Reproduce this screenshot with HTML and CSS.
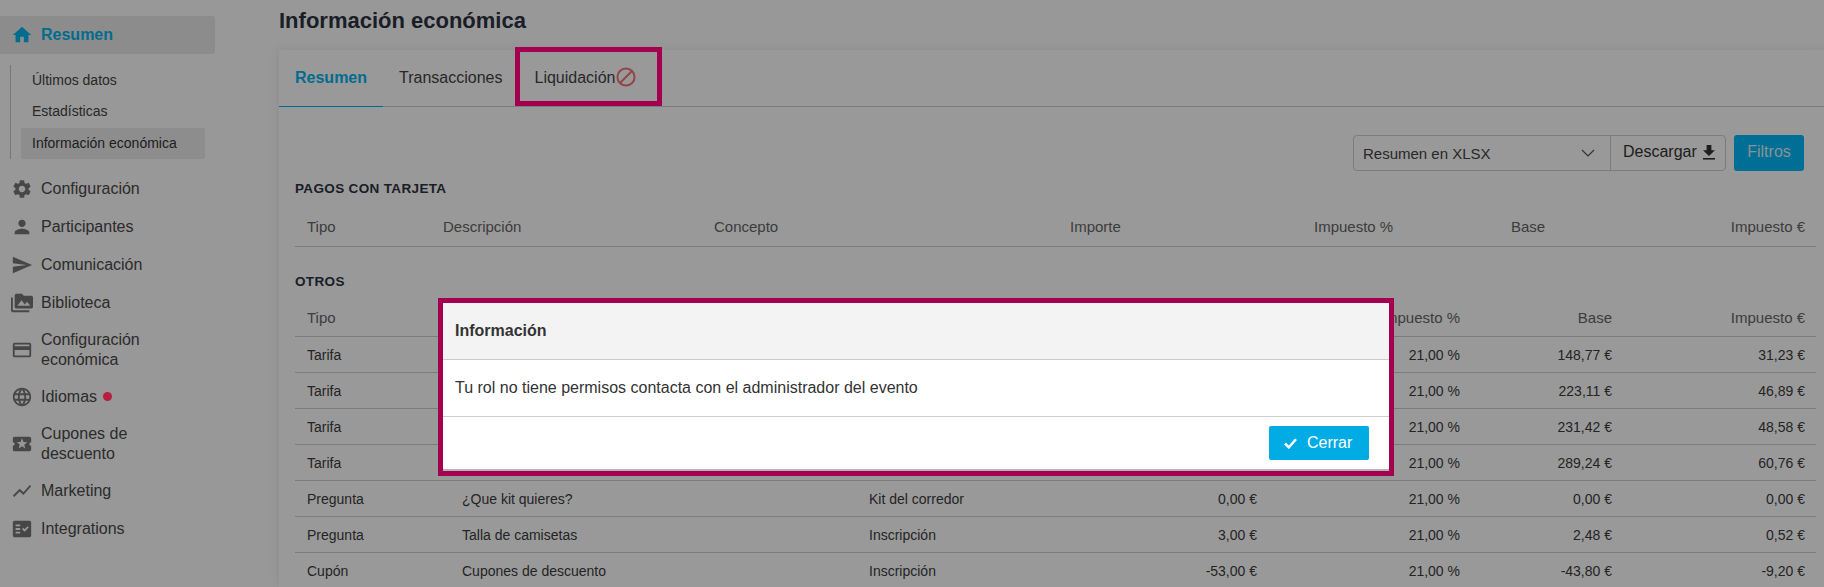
FILE: index.html
```html
<!DOCTYPE html>
<html lang="es">
<head>
<meta charset="utf-8">
<title>Información económica</title>
<link rel="stylesheet" href="styles.css">
</head>
<body>
<div class="app">
  <nav class="sidebar">
    <a class="nav-item nav-active"><svg class="nav-icon" viewBox="0 0 24 24"><path d="M10 20v-6h4v6h5v-8h3L12 3 2 12h3v8z"/></svg><span class="nav-text">Resumen</span></a>
    <div class="subnav">
      <a class="sub-item">Últimos datos</a>
      <a class="sub-item">Estadísticas</a>
      <a class="sub-item sub-active">Información económica</a>
    </div>
    <a class="nav-item"><svg class="nav-icon" viewBox="0 0 24 24"><path d="M19.14 12.94c.04-.3.06-.61.06-.94 0-.32-.02-.64-.07-.94l2.03-1.58c.18-.14.23-.41.12-.61l-1.92-3.32c-.12-.22-.37-.29-.59-.22l-2.39.96c-.5-.38-1.03-.7-1.62-.94l-.36-2.54c-.04-.24-.24-.41-.48-.41h-3.84c-.24 0-.43.17-.47.41l-.36 2.54c-.59.24-1.13.57-1.62.94l-2.39-.96c-.22-.08-.47 0-.59.22L2.74 8.87c-.12.21-.08.47.12.61l2.03 1.58c-.05.3-.09.63-.09.94s.02.64.07.94l-2.03 1.58c-.18.14-.23.41-.12.61l1.92 3.32c.12.22.37.29.59.22l2.39-.96c.5.38 1.03.7 1.62.94l.36 2.54c.05.24.24.41.48.41h3.84c.24 0 .44-.17.47-.41l.36-2.54c.59-.24 1.13-.56 1.62-.94l2.39.96c.22.08.47 0 .59-.22l1.92-3.32c.12-.22.07-.47-.12-.61l-2.01-1.58zM12 15.6c-1.98 0-3.6-1.62-3.6-3.6s1.62-3.6 3.6-3.6 3.6 1.62 3.6 3.6-1.62 3.6-3.6 3.6z"/></svg><span class="nav-text">Configuración</span></a>
    <a class="nav-item"><svg class="nav-icon" viewBox="0 0 24 24"><path d="M12 12c2.21 0 4-1.79 4-4s-1.79-4-4-4-4 1.79-4 4 1.79 4 4 4zm0 2c-2.67 0-8 1.34-8 4v2h16v-2c0-2.66-5.33-4-8-4z"/></svg><span class="nav-text">Participantes</span></a>
    <a class="nav-item"><svg class="nav-icon" viewBox="0 0 24 24"><path d="M2.01 21L23 12 2.01 3 2 10l15 2-15 2z"/></svg><span class="nav-text">Comunicación</span></a>
    <a class="nav-item"><svg class="nav-icon" viewBox="0 0 24 24"><path d="M2 6H0v5h.01L0 20c0 1.1.9 2 2 2h18v-2H2V6zm20-2h-8l-2-2H6c-1.1 0-1.99.9-1.99 2L4 16c0 1.1.9 2 2 2h16c1.1 0 2-.9 2-2V6c0-1.1-.9-2-2-2zM7 15l4.5-6 3.5 4.51 2.5-3.01L21 15H7z"/></svg><span class="nav-text">Biblioteca</span></a>
    <a class="nav-item"><svg class="nav-icon" viewBox="0 0 24 24"><path d="M20 4H4c-1.11 0-1.99.89-1.99 2L2 18c0 1.11.89 2 2 2h16c1.11 0 2-.89 2-2V6c0-1.11-.89-2-2-2zm0 14H4v-6h16v6zm0-10H4V6h16v2z"/></svg><span class="nav-text">Configuración económica</span></a>
    <a class="nav-item"><svg class="nav-icon" viewBox="0 0 24 24"><path d="M11.99 2C6.47 2 2 6.48 2 12s4.47 10 9.99 10C17.52 22 22 17.52 22 12S17.52 2 11.99 2zm6.93 6h-2.95c-.32-1.25-.78-2.45-1.38-3.56 1.84.63 3.37 1.91 4.33 3.56zM12 4.04c.83 1.2 1.48 2.53 1.91 3.96h-3.82c.43-1.43 1.08-2.76 1.91-3.96zM4.26 14C4.1 13.36 4 12.69 4 12s.1-1.36.26-2h3.38c-.08.66-.14 1.32-.14 2 0 .68.06 1.34.14 2H4.26zm.82 2h2.95c.32 1.25.78 2.45 1.38 3.56-1.84-.63-3.37-1.9-4.33-3.56zm2.95-8H5.08c.96-1.66 2.49-2.93 4.33-3.56C8.81 5.55 8.35 6.75 8.03 8zM12 19.96c-.83-1.2-1.48-2.53-1.91-3.96h3.82c-.43 1.43-1.08 2.76-1.91 3.96zM14.34 14H9.66c-.09-.66-.16-1.32-.16-2 0-.68.07-1.35.16-2h4.68c.09.65.16 1.32.16 2 0 .68-.07 1.34-.16 2zm.25 5.56c.6-1.11 1.06-2.31 1.38-3.56h2.95c-.96 1.65-2.49 2.93-4.33 3.56zM16.36 14c.08-.66.14-1.32.14-2 0-.68-.06-1.34-.14-2h3.38c.16.64.26 1.31.26 2s-.1 1.36-.26 2h-3.38z"/></svg><span class="nav-text">Idiomas</span><span class="nav-dot"></span></a>
    <a class="nav-item"><svg class="nav-icon" viewBox="0 0 24 24"><path d="M20 12c0-1.1.9-2 2-2V6c0-1.1-.9-2-2-2H4c-1.1 0-1.99.9-1.99 2v4c1.1 0 1.99.9 1.99 2s-.89 2-2 2v4c0 1.1.9 2 2 2h16c1.1 0 2-.9 2-2v-4c-1.1 0-2-.9-2-2zm-4.42 4.8L12 14.5l-3.58 2.3 1.08-4.12-3.29-2.69 4.24-.25L12 5.8l1.54 3.95 4.24.25-3.29 2.69 1.09 4.11z"/></svg><span class="nav-text">Cupones de descuento</span></a>
    <a class="nav-item"><svg class="nav-icon" viewBox="0 0 24 24"><path d="M3.5 18.49l6-6.01 4 4L22 6.92l-1.41-1.41-7.09 7.97-4-4L2 16.99z"/></svg><span class="nav-text">Marketing</span></a>
    <a class="nav-item"><svg class="nav-icon" viewBox="0 0 24 24"><path d="M20 3H4c-1.1 0-2 .9-2 2v14c0 1.1.9 2 2 2h16c1.1 0 2-.9 2-2V5c0-1.1-.9-2-2-2zM10 17H5v-2h5v2zm0-4H5v-2h5v2zm0-4H5V7h5v2zm4.82 6L12 12.16l1.41-1.41 1.41 1.42L17.99 9l1.42 1.42L14.82 15z"/></svg><span class="nav-text">Integrations</span></a>
  </nav>

  <main class="main">
    <h1 class="page-title">Información económica</h1>
    <section class="card">
      <div class="tabs">
        <a class="tab tab-active">Resumen</a>
        <a class="tab">Transacciones</a>
        <a class="tab tab-marked">Liquidación<svg class="ban-icon" viewBox="0 0 20 20"><circle cx="10" cy="10" r="8.6"/><path d="M4 16L16 4"/></svg></a>
      </div>
      <div class="card-body">
        <div class="toolbar">
          <div class="export">
            <div class="export-select"><span>Resumen en XLSX</span><svg class="chevron" viewBox="0 0 14 8"><path d="M1 1l6 6 6-6"/></svg></div>
            <button class="export-btn">Descargar<svg class="dl-icon" viewBox="0 0 14 15"><path d="M4.6 0h4.8v5.2H13L7 11 1 5.2h3.6z"/><path d="M1 13h12v1.6H1z"/></svg></button>
          </div>
          <button class="filters-btn">Filtros</button>
        </div>

        <h2 class="section-title section-first">PAGOS CON TARJETA</h2>
        <table class="data data-cards">
          <thead><tr><th>Tipo</th><th>Descripción</th><th>Concepto</th><th>Importe</th><th>Impuesto %</th><th>Base</th><th>Impuesto €</th></tr></thead>
        </table>

        <h2 class="section-title section-next">OTROS</h2>
        <table class="data data-others">
          <thead><tr><th>Tipo</th><th></th><th></th><th></th><th>Impuesto %</th><th>Base</th><th>Impuesto €</th></tr></thead>
          <tbody>
            <tr><td>Tarifa</td><td></td><td></td><td></td><td>21,00 %</td><td>148,77 €</td><td>31,23 €</td></tr>
            <tr><td>Tarifa</td><td></td><td></td><td></td><td>21,00 %</td><td>223,11 €</td><td>46,89 €</td></tr>
            <tr><td>Tarifa</td><td></td><td></td><td></td><td>21,00 %</td><td>231,42 €</td><td>48,58 €</td></tr>
            <tr><td>Tarifa</td><td></td><td></td><td></td><td>21,00 %</td><td>289,24 €</td><td>60,76 €</td></tr>
            <tr><td>Pregunta</td><td>¿Que kit quieres?</td><td>Kit del corredor</td><td>0,00 €</td><td>21,00 %</td><td>0,00 €</td><td>0,00 €</td></tr>
            <tr><td>Pregunta</td><td>Talla de camisetas</td><td>Inscripción</td><td>3,00 €</td><td>21,00 %</td><td>2,48 €</td><td>0,52 €</td></tr>
            <tr><td>Cupón</td><td>Cupones de descuento</td><td>Inscripción</td><td>-53,00 €</td><td>21,00 %</td><td>-43,80 €</td><td>-9,20 €</td></tr>
          </tbody>
        </table>
      </div>
    </section>
  </main>
</div>

<div class="backdrop"></div>
<div class="modal">
  <div class="modal-head">Información</div>
  <div class="modal-body">Tu rol no tiene permisos contacta con el administrador del evento</div>
  <div class="modal-foot">
    <button class="close-btn"><svg class="check-icon" viewBox="0 0 16 13"><path d="M1.5 6.5L6 11l8.5-9.5"/></svg>Cerrar</button>
  </div>
</div>
</body>
</html>
```
FILE: styles.css
```css
*, *::before, *::after { box-sizing: border-box; }
html, body { margin: 0; height: 587px; overflow: hidden; }
body {
  background: #fdfdfd;
  color: #333;
  font-family: "Liberation Sans", Arial, sans-serif;
  font-size: 14px;
}
.app { display: flex; height: 587px; overflow: hidden; }

/* Sidebar */
.sidebar { flex: 0 0 279px; padding-top: 16px; }
.nav-item {
  display: flex;
  align-items: center;
  width: 215px;
  min-height: 38px;
  padding: 8px 0 8px 11px;
  font-size: 16px;
  line-height: 20px;
  color: #4a4a4a;
}
.nav-icon { flex: 0 0 22px; width: 22px; height: 22px; margin-right: 8px; fill: #777; }
.nav-text { max-width: 130px; }
.nav-active { background: #eaeaea; border-radius: 0 3px 3px 0; color: #00b4ee; font-weight: 700; }
.nav-active .nav-icon { fill: #00b4ee; }
.nav-dot {
  position: relative;
  z-index: 20;
  width: 9px;
  height: 9px;
  margin-left: 6px;
  border-radius: 50%;
  background: #b81c40;
}
.subnav {
  display: flex;
  flex-direction: column;
  width: 195px;
  margin: 11px 0 11px 10px;
  padding-left: 10px;
  border-left: 1px solid #c8c8c8;
}
.sub-item {
  height: 31.33px;
  padding-left: 11px;
  font-size: 14px;
  line-height: 31px;
  color: #444;
}
.sub-active { background: #ececec; border-radius: 2px; color: #333; }

/* Main */
.main { flex: 1; min-width: 0; }
.page-title {
  height: 50px;
  margin: 0;
  padding-top: 7px;
  font-size: 22px;
  line-height: 28px;
  font-weight: 700;
  color: #2c3342;
}
.card {
  height: 537px;
  background: #ffffff;
  box-shadow: 0 0 10px rgba(0, 0, 0, .08);
}
.tabs { display: flex; height: 57px; border-bottom: 1px solid #cfcfcf; }
.tab {
  position: relative;
  height: 57px;
  padding: 0 16px;
  font-size: 16px;
  line-height: 55px;
  color: #444;
}
.tab-active { color: #00b4ee; font-weight: 700; border-bottom: 1px solid #00b4ee; }
.tab-marked { display: flex; align-items: center; padding-bottom: 3px; }
.tab-marked::after {
  content: "";
  position: absolute;
  z-index: 20;
  top: -3px;
  left: -3px;
  width: 147px;
  height: 59px;
  border: 5px solid #a3004f;
}
.ban-icon { width: 20px; height: 20px; margin-left: 1px; fill: none; stroke: #f07678; stroke-width: 2; }
.card-body { padding: 28px 8px 0 16px; }
.toolbar { display: flex; justify-content: flex-end; gap: 8px; padding-right: 12px; }
.export {
  display: flex;
  height: 36px;
  border: 1px solid #cfcfcf;
  border-radius: 4px;
}
.export-select {
  display: flex;
  align-items: center;
  justify-content: space-between;
  width: 257px;
  padding: 0 15px 0 9px;
  font-size: 15px;
  color: #444;
  border-right: 1px solid #cfcfcf;
}
.chevron { width: 14px; height: 8px; fill: none; stroke: #555; stroke-width: 1.2; }
.export-btn {
  display: flex;
  align-items: center;
  gap: 5px;
  width: 114px;
  padding: 0 0 2px 12px;
  border: 0;
  background: none;
  font: inherit;
  font-size: 16px;
  color: #333;
}
.dl-icon { width: 14px; height: 15px; fill: #333; }
.filters-btn {
  width: 70px;
  height: 36px;
  padding: 0 0 2px;
  border: 0;
  border-radius: 3px;
  background: #00b8f8;
  color: #dff4fb;
  font: inherit;
  font-size: 16px;
}
.section-title {
  margin: 0;
  font-size: 13.5px;
  line-height: 18px;
  font-weight: 700;
  letter-spacing: .35px;
  color: #2c3342;
}
.section-first { margin: 9px 0 12px; }
.section-next { margin: 26px 0 10px; }

/* Tables */
.data { width: 1521px; border-collapse: collapse; table-layout: fixed; }
.data th, .data td {
  height: 36px;
  padding: 0 11px 0 12px;
  border-bottom: 1px solid #cfcfcf;
  font-size: 14px;
  font-weight: 400;
  text-align: left;
  white-space: nowrap;
}
.data th { color: #666; font-size: 15px; padding-bottom: 1px; }
.data-cards th { padding-bottom: 3px; }
.data td { color: #3c3c3c; }
.data-cards th:nth-child(1) { width: 136px; }
.data-cards th:nth-child(2) { width: 271px; }
.data-cards th:nth-child(3) { width: 356px; }
.data-cards th:nth-child(4) { width: 244px; }
.data-cards th:nth-child(5) { width: 197px; }
.data-cards th:nth-child(6) { width: 122px; }
.data-cards th:nth-child(7) { width: 195px; text-align: right; }
.data-others th:nth-child(1) { width: 155px; }
.data-others th:nth-child(2) { width: 407px; }
.data-others th:nth-child(3) { width: 243px; }
.data-others th:nth-child(4) { width: 168px; }
.data-others th:nth-child(5) { width: 203px; }
.data-others th:nth-child(6) { width: 152px; }
.data-others th:nth-child(7) { width: 193px; }
.data-others th:nth-child(n+4), .data-others td:nth-child(n+4) { text-align: right; }

/* Modal */
.backdrop { position: fixed; inset: 0; z-index: 10; background: rgba(0, 0, 0, .4); }
.modal {
  position: fixed;
  z-index: 30;
  top: 298px;
  left: 438px;
  width: 956px;
  height: 178px;
  border: 5px solid #a3004f;
  background: #fff;
}
.modal-head {
  height: 57px;
  padding: 0 12px;
  background: #f3f3f3;
  border-bottom: 1px solid #ccc;
  font-size: 16px;
  font-weight: 700;
  line-height: 55px;
  color: #333;
}
.modal-body {
  height: 57px;
  padding: 0 12px;
  border-bottom: 1px solid #ccc;
  font-size: 16px;
  line-height: 55px;
  color: #333;
}
.modal-foot {
  display: flex;
  justify-content: flex-end;
  height: 54px;
  padding: 9px 20px 0 0;
  border-bottom: 2px solid #b5b5b5;
}
.close-btn {
  display: flex;
  align-items: center;
  gap: 9px;
  width: 100px;
  height: 34px;
  padding: 0 0 0 14px;
  border: 0;
  border-radius: 2px;
  background: #00ace3;
  color: #fff;
  font: inherit;
  font-size: 16px;
}
.check-icon { width: 15px; height: 11px; fill: none; stroke: #fff; stroke-width: 3; }
```
